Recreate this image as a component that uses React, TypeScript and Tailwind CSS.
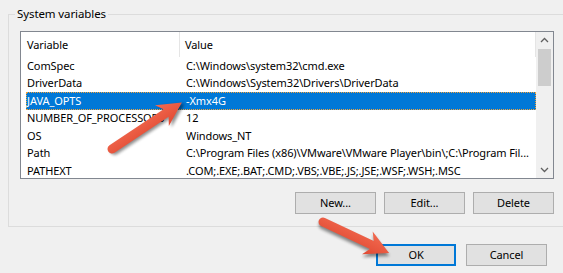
import React from "react";

const rows = [
  { name: "ComSpec", value: "C:\\Windows\\system32\\cmd.exe" },
  { name: "DriverData", value: "C:\\Windows\\System32\\Drivers\\DriverData" },
  { name: "JAVA_OPTS", value: "-Xmx4G", selected: true },
  { name: "NUMBER_OF_PROCESSORS", value: "12" },
  { name: "OS", value: "Windows_NT" },
  { name: "Path", value: "C:\\Program Files (x86)\\VMware\\VMware Player\\bin\\;C:\\Program Fil..." },
  { name: "PATHEXT", value: ".COM;.EXE;.BAT;.CMD;.VBS;.VBE;.JS;.JSE;.WSF;.WSH;.MSC" },
];

function Arrow({ x, y, angle, length }: { x: number; y: number; angle: number; length: number }) {
  const L = length;
  const d = `M0,-4.5 L${L - 19},-4.5 L${L - 24},-12.5 L${L},0 L${L - 24},12.5 L${L - 19},4.5 L0,4.5 A4.5,4.5 0 0 1 0,-4.5 Z`;
  return (
    <g transform={`translate(${x} ${y}) rotate(${angle})`}>
      <path d={d} fill="#000" opacity="0.45" transform="translate(1.5 2.5)" filter="url(#blur)" />
      <path d={d} fill="url(#arrowFill)" />
    </g>
  );
}

function Button({ label, primary }: { label: string; primary?: boolean }) {
  return (
    <button
      className={
        primary
          ? "w-[80px] h-[22px] bg-[#e1e1e1] border border-[#0078d7] shadow-[inset_0_0_0_1px_#0078d7] text-[#000]"
          : "w-[81px] h-[22px] bg-[#e1e1e1] border border-[#adadad] text-[#000]"
      }
    >
      {label}
    </button>
  );
}

export default function App() {
  return (
    <div className="relative w-[563px] h-[273px] overflow-hidden bg-[#f0f0f0] text-[11px] tracking-[-0.1px] leading-[16px] text-[#000] font-['Segoe_UI','Noto_Sans',sans-serif]">
      <fieldset className="ml-[8px] mt-[6px] w-[600px] h-[221px] border border-[#dcdcdc] pl-[11px] pt-[9px]">
        <legend className="ml-[-5px] px-[2px] leading-[16px] text-[11.5px]">System variables</legend>
        <div className="flex w-[534px] h-[148px] border border-[#828790] bg-white">
          <div className="flex-1 flex flex-col overflow-hidden">
            <div className="flex h-[25px] shrink-0 items-center">
              <div className="w-[159px] h-full flex items-center pl-[6px] border-r border-[#e5e5e5]">Variable</div>
              <div className="flex-1 h-full flex items-center pl-[5px] border-r border-[#e5e5e5]">Value</div>
            </div>
            {rows.map((r) => (
              <div
                key={r.name}
                className={
                  r.selected
                    ? "flex shrink-0 h-[17.5px] ml-[5px] items-center bg-[#0078d7] text-white outline-1 outline-dotted outline-offset-[-1px] outline-[#f2a33a]"
                    : "flex shrink-0 h-[17.5px] ml-[5px] items-center"
                }
              >
                <div className="w-[154px] pl-[1px] overflow-hidden whitespace-nowrap">{r.name}</div>
                <div className="flex-1 pl-[6px] overflow-hidden whitespace-nowrap">{r.value}</div>
              </div>
            ))}
          </div>
          <div className="w-[17px] bg-[#f0f0f0] flex flex-col items-center">
            <svg width="17" height="17" viewBox="0 0 17 17" className="shrink-0">
              <path d="M5 10 L8.5 6.5 L12 10" fill="none" stroke="#606060" strokeWidth="1.3" />
            </svg>
            <div className="w-[13px] h-[37px] bg-[#cdcdcd]" />
            <div className="flex-1" />
            <svg width="17" height="17" viewBox="0 0 17 17" className="shrink-0">
              <path d="M5 7 L8.5 10.5 L12 7" fill="none" stroke="#606060" strokeWidth="1.3" />
            </svg>
          </div>
        </div>
        <div className="flex justify-end gap-[8px] w-[534px] mt-[13px]">
          <Button label="New..." />
          <Button label="Edit..." />
          <Button label="Delete" />
        </div>
      </fieldset>
      <div className="flex justify-end gap-[10px] pr-[16px] mt-[17px]">
        <Button label="OK" primary />
        <Button label="Cancel" />
      </div>
      <svg className="absolute inset-0 pointer-events-none" width="563" height="273">
        <defs>
          <linearGradient id="arrowFill" x1="0" y1="0" x2="0" y2="1">
            <stop offset="0" stopColor="#f26a50" />
            <stop offset="1" stopColor="#e14a33" />
          </linearGradient>
          <filter id="blur" x="-20%" y="-50%" width="140%" height="200%">
            <feGaussianBlur stdDeviation="1.5" />
          </filter>
        </defs>
        <Arrow x={112} y={149} angle={-33.7} length={84} />
        <Arrow x={323} y={222} angle={25.2} length={73} />
      </svg>
    </div>
  );
}
